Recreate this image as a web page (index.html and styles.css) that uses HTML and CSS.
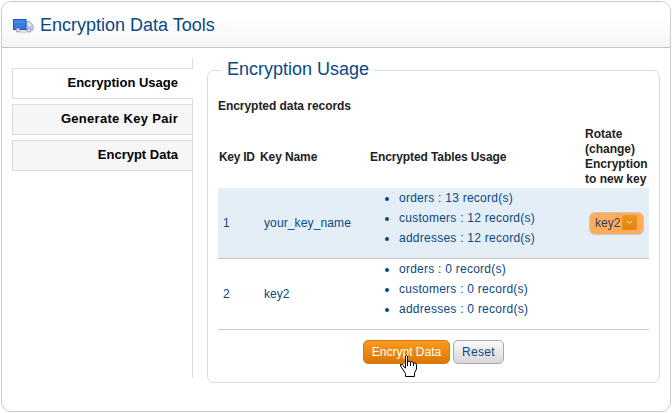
FILE: index.html
```html
<!DOCTYPE html>
<html lang="en">
<head>
<meta charset="utf-8">
<title>Encryption Data Tools</title>
<link rel="stylesheet" href="styles.css">
</head>
<body>
<main class="panel">
  <header class="panel-header">
    <svg class="truck" width="22" height="18" viewBox="0 0 22 18">
      <defs>
        <linearGradient id="cargo" x1="0" y1="0" x2="0" y2="1"><stop offset="0" stop-color="#4389ea"/><stop offset="1" stop-color="#3470d0"/></linearGradient>
      </defs>
      <ellipse cx="11" cy="14.8" rx="8.500" ry="1.500" fill="#dededb"/>
      <path d="M13 4.500h3.500l3.500 4v4.500h-7z" fill="#c6caec" stroke="#9da1cf"/>
      <path d="M15.500 5.500h1l2 3h-3z" fill="#eef1fd"/>
      <rect x=".5" y="2.500" width="12.500" height="10" fill="url(#cargo)" stroke="#2259b7"/>
      <path d="M2 5.500h10M2 8.500h10" stroke="#4d8be5" stroke-width=".6"/>
      <circle cx="5" cy="13" r="1.800" fill="#e9ebfa" stroke="#9397c9"/>
      <circle cx="16" cy="13" r="1.800" fill="#e9ebfa" stroke="#9397c9"/>
    </svg>
    <h1 class="title">Encryption Data Tools</h1>
  </header>
  <div class="content">
    <nav class="tabs">
      <a class="tab active">Encryption Usage</a>
      <a class="tab tab-generate">Generate Key Pair</a>
      <a class="tab">Encrypt Data</a>
    </nav>
    <section class="box">
      <h2 class="legend">Encryption Usage</h2>
      <p class="caption">Encrypted data records</p>
      <div class="row head">
        <div class="h-id">Key ID</div>
        <div class="h-name">Key Name</div>
        <div class="h-usage">Encrypted Tables Usage</div>
        <div>Rotate<br>(change)<br>Encryption<br>to new key</div>
      </div>
      <div class="row data shaded">
        <div class="cell">1</div>
        <div class="cell name">your_key_name</div>
        <ul class="usage"><li>orders : 13 record(s)</li><li>customers : 12 record(s)</li><li>addresses : 12 record(s)</li></ul>
        <div class="cell">
          <button class="select">key2<span class="arrow"><svg width="7" height="5" viewBox="0 0 7 5"><path d="M1 1l2.500 2.500L6 1" fill="none" stroke="#fff3dd"/></svg></span></button>
        </div>
      </div>
      <div class="row data">
        <div class="cell">2</div>
        <div class="cell">key2</div>
        <ul class="usage"><li>orders : 0 record(s)</li><li>customers : 0 record(s)</li><li>addresses : 0 record(s)</li></ul>
        <div></div>
      </div>
      <div class="actions">
        <button class="button primary">Encrypt Data</button>
        <button class="button reset">Reset</button>
        <svg class="cursor" width="17" height="22" viewBox="0 0 17 22">
          <path d="M5.500 12V2Q5.500 .5 6.500 .5Q7.500 .5 7.500 2V7Q9 5 10.500 7Q12 6 13.500 8Q16.500 7 16.500 10V14L14.500 18V21.500H5.500V18.500L2.500 14L.5 11V9.500H2.500L4 12L5.500 13Z" fill="#fff" stroke="#000"/>
          <path d="M7.500 6V11M10.500 7V11M13.500 8V11" stroke="#000" fill="none"/>
        </svg>
      </div>
    </section>
  </div>
</main>
</body>
</html>
```
FILE: styles.css
```css
* { box-sizing: border-box; }
body {
  margin: 0;
  padding: 1px;
  background: #fff;
  color: #0a4784;
  font: 12px/15px "Liberation Sans", Arial, sans-serif;
}
h1, h2, p, ul { margin: 0; padding: 0; font-weight: normal; }
button { font: inherit; }
.panel {
  width: 670px;
  height: 411px;
  border: 1px solid #c9c9ce;
  border-radius: 10px;
  overflow: hidden;
}
.panel-header {
  display: flex;
  height: 46px;
  padding: 0 11px;
  border-bottom: 1px solid #c5c5c8;
  background: linear-gradient(#fff 35%, #f5f5f5);
}
.truck { margin: 15px 5px 0 0; }
.title { font-size: 18px; line-height: 46px; letter-spacing: 0; }
.content { display: flex; gap: 14px; padding: 10px 10px 0; }
.tabs {
  display: flex;
  flex-direction: column;
  gap: 5px;
  width: 181px;
  height: 320px;
  padding-top: 10px;
  border-right: 1px solid #dcdcdc;
}
.tab {
  height: 31px;
  padding: 0 14px 0 0;
  border: 1px solid #dcdcdc;
  border-right: 0;
  background: #f6f6f6;
  color: #000;
  font-size: 13px;
  font-weight: bold;
  line-height: 27px;
  text-align: right;
}
.tab-generate { letter-spacing: .3px; }
.active { margin-right: -1px; padding-right: 15px; background: #fff; }
.box {
  width: 453px;
  height: 313px;
  margin-top: 12px;
  padding: 0 10px;
  border: 1px solid #dcdcdc;
  border-radius: 7px;
}
.legend {
  width: 152px;
  height: 24px;
  margin: -14px 0 0 4px;
  padding-left: 5px;
  background: #fff;
  font-size: 18px;
  line-height: 25px;
  white-space: nowrap;
}
.caption { margin-top: 18px; color: #222; font-weight: bold; letter-spacing: -.05px; }
.row { display: grid; grid-template-columns: 41px 110px 215px 65px; align-items: center; }
.head {
  height: 62px;
  margin-top: 12px;
  color: #222;
  font-weight: bold;
  white-space: nowrap;
}
.head > div { padding-left: 1px; }
.h-id { letter-spacing: -.3px; }
.h-name { letter-spacing: -.1px; }
.h-usage { letter-spacing: -.1px; }
.data { height: 71px; border-bottom: 1px solid #c6c6c9; }
.shaded { background: #e3eef7; }
.cell { padding-left: 5px; }
.name { letter-spacing: .12px; }
.usage { align-self: start; padding-left: 30px; line-height: 20px; letter-spacing: .25px; white-space: nowrap; }
.select {
  display: flex;
  align-items: center;
  gap: 2px;
  width: 55px;
  height: 23px;
  padding: 1px 5px 0;
  border: 1px solid #cfc6c1;
  border-radius: 6px;
  background: #ffac5b;
  color: #244464;
}
.arrow {
  display: grid;
  place-items: center;
  flex: none;
  width: 15px;
  height: 15px;
  margin-top: -2px;
  border-radius: 2px;
  background: linear-gradient(#f39618, #e28310);
}
.actions { position: relative; display: flex; gap: 3px; margin: 10px 0 0 145px; }
.button {
  width: 51px;
  height: 24px;
  padding: 0;
  border: 1px solid #aaa;
  border-radius: 5px;
  background: linear-gradient(#fafafa, #d7d7d7);
  color: #0a4784;
}
.reset { letter-spacing: .3px; }
.primary { width: 87px; border-color: #d27c12; background: linear-gradient(#f99b1d, #d97805); color: #fff; }
.cursor { position: absolute; left: 37px; top: 15px; }
```
